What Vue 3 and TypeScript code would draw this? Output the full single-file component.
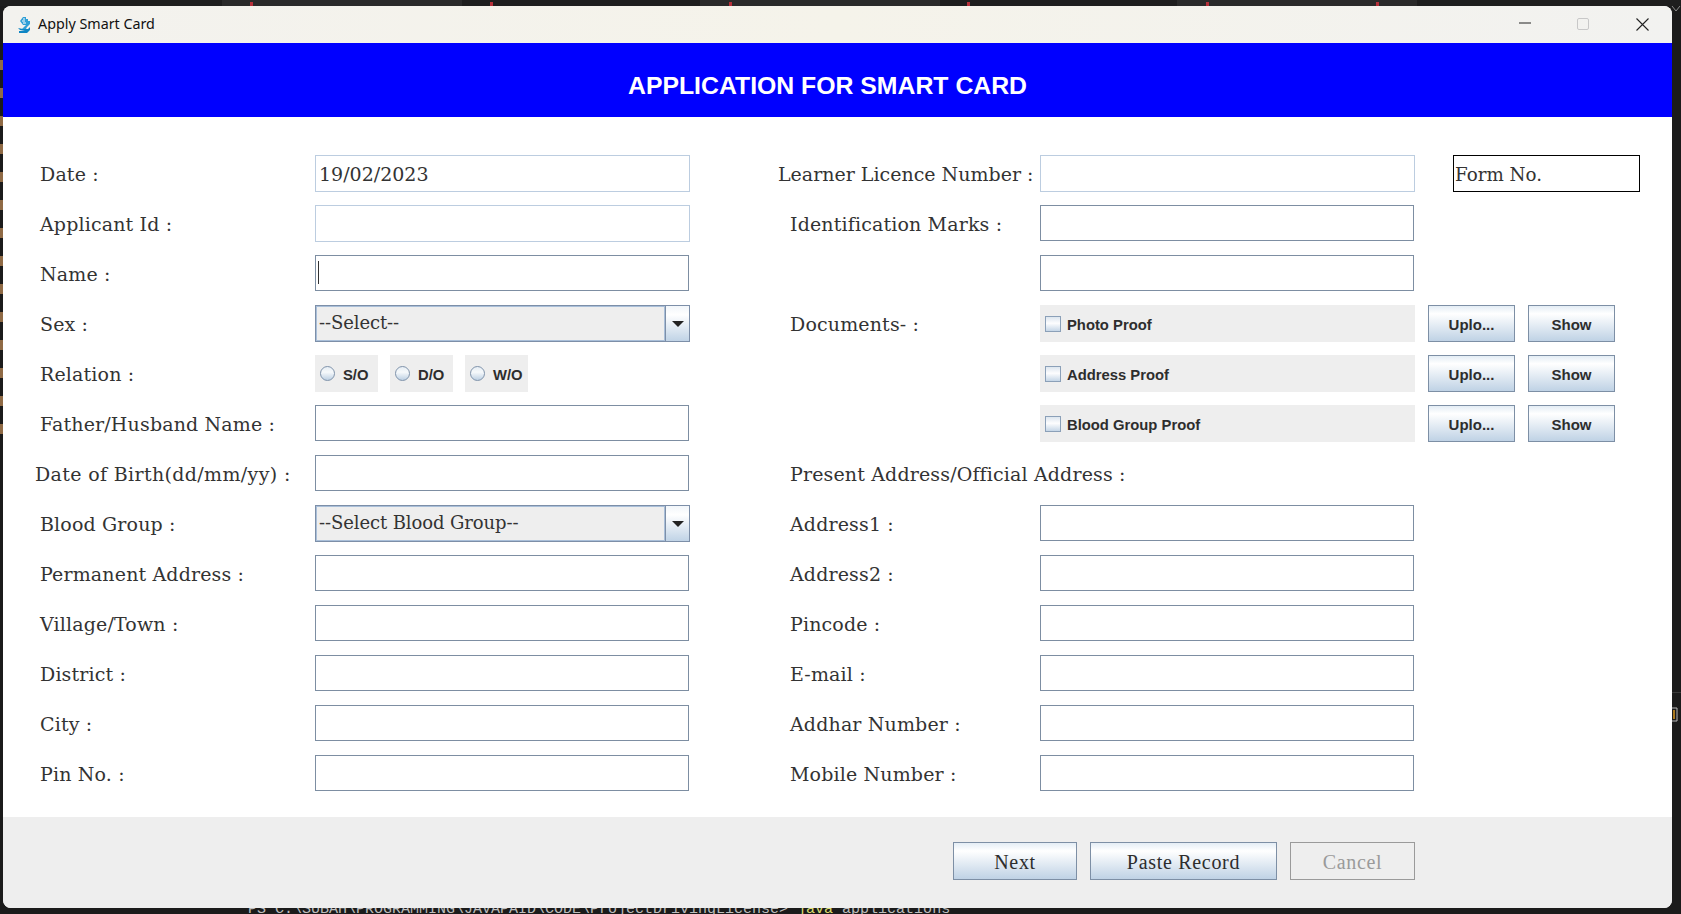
<script setup lang="ts">
type Ctl = { kind: 'input' | 'faint' | 'caret' | 'select' | 'radio' | 'check' | 'none'; value?: string }
interface Row {
  left: string
  leftCtl: Ctl
  right?: string
  rightCtl: Ctl
  shiftLeft?: boolean
  shiftRight?: boolean
  form?: boolean
  actions?: boolean
}
const rows: Row[] = [
  { left: 'Date :', leftCtl: { kind: 'faint', value: '19/02/2023' }, right: 'Learner Licence Number :', rightCtl: { kind: 'faint' }, shiftRight: true, form: true },
  { left: 'Applicant Id :', leftCtl: { kind: 'faint' }, right: 'Identification Marks :', rightCtl: { kind: 'input' } },
  { left: 'Name :', leftCtl: { kind: 'caret' }, rightCtl: { kind: 'input' } },
  { left: 'Sex :', leftCtl: { kind: 'select', value: '--Select--' }, right: 'Documents- :', rightCtl: { kind: 'check', value: 'Photo Proof' }, actions: true },
  { left: 'Relation :', leftCtl: { kind: 'radio' }, rightCtl: { kind: 'check', value: 'Address Proof' }, actions: true },
  { left: 'Father/Husband Name :', leftCtl: { kind: 'input' }, rightCtl: { kind: 'check', value: 'Blood Group Proof' }, actions: true },
  { left: 'Date of Birth(dd/mm/yy) :', leftCtl: { kind: 'input' }, right: 'Present Address/Official Address :', rightCtl: { kind: 'none' }, shiftLeft: true },
  { left: 'Blood Group :', leftCtl: { kind: 'select', value: '--Select Blood Group--' }, right: 'Address1 :', rightCtl: { kind: 'input' } },
  { left: 'Permanent Address :', leftCtl: { kind: 'input' }, right: 'Address2 :', rightCtl: { kind: 'input' } },
  { left: 'Village/Town :', leftCtl: { kind: 'input' }, right: 'Pincode :', rightCtl: { kind: 'input' } },
  { left: 'District :', leftCtl: { kind: 'input' }, right: 'E-mail :', rightCtl: { kind: 'input' } },
  { left: 'City :', leftCtl: { kind: 'input' }, right: 'Addhar Number :', rightCtl: { kind: 'input' } },
  { left: 'Pin No. :', leftCtl: { kind: 'input' }, right: 'Mobile Number :', rightCtl: { kind: 'input' } },
]
const radios = ['S/O', 'D/O', 'W/O']
const redMarks = [250, 490, 729, 967, 1206, 1376]
const sideMarks = Array.from({ length: 14 }, (_, i) => 60 + i * 28)
</script>

<template>
  <div class="desktop">
    <div class="tabs" aria-hidden="true">
      <i class="tab tab-a"></i><i class="tab tab-b"></i><i class="tab tab-c"></i>
      <i v-for="x in redMarks" :key="x" class="red" :style="{ left: x + 'px' }"></i>
    </div>
    <i v-for="y in sideMarks" :key="y" class="side" :style="{ top: y + 'px' }"></i>
    <svg class="corner" width="10" height="8" viewBox="0 0 10 8"><path d="M1 1l4 5 4-5" fill="none" stroke="#8a8a8a" /></svg>
    <i class="edge-line"></i>
    <svg class="edge-icon" width="6" height="17" viewBox="0 0 6 17"><path d="M0 3h5v13H0" fill="none" stroke="#b9b9b9" /><path d="M1 5h2v9H1z" fill="#a9781e" /></svg>
    <div class="terminal">PS C:\SUBAH\PROGRAMMING\JAVAPAID\CODE\ProjectDrivingLicense&gt; <span class="cmd">java</span> applications</div>

    <main class="window">
      <header class="titlebar">
        <svg class="app-icon" width="14" height="18" viewBox="0 0 14 18">
          <path d="M6 1h3v2h2v2h2v3l-3 3-1 2H5l4-4H6L3 5z" fill="#2f9fd6" />
          <path d="M6 3l2 0M5 5l3 0M6 7l3 0" stroke="#fff" stroke-width="1" />
          <path d="M1 12l5 1h5l2-2v3l-3 3H2v-2h6l-5-1z" fill="#0f86c4" />
        </svg>
        <span class="title">Apply Smart Card</span>
        <div class="controls">
          <svg class="ctl-min" width="12" height="2" viewBox="0 0 12 2"><path d="M0 1h12" stroke="#222" stroke-width="1.2" /></svg>
          <svg class="ctl-max" width="12" height="12" viewBox="0 0 12 12"><rect x=".5" y=".5" width="11" height="11" rx="1.5" fill="none" stroke="#c8c8c8" /></svg>
          <svg class="ctl-close" width="13" height="13" viewBox="0 0 13 13"><path d="M.5.5l12 12M12.5.5l-12 12" stroke="#222" stroke-width="1.1" /></svg>
        </div>
      </header>

      <div class="banner"><h1>APPLICATION FOR SMART CARD</h1></div>

      <section class="form">
        <div v-for="row in rows" :key="row.left" class="row">
          <label class="label" :class="{ 'shift-l': row.shiftLeft }">{{ row.left }}</label>

          <div class="ctl">
            <input v-if="row.leftCtl.kind === 'faint'" class="field faint" :value="row.leftCtl.value ?? ''" readonly />
            <div v-else-if="row.leftCtl.kind === 'caret'" class="caret-wrap">
              <input class="field" readonly />
              <i class="caret"></i>
            </div>
            <div v-else-if="row.leftCtl.kind === 'select'" class="combo">
              <span class="combo-text">{{ row.leftCtl.value }}</span>
              <span class="combo-btn"><i class="arrow"></i></span>
            </div>
            <div v-else-if="row.leftCtl.kind === 'radio'" class="radios">
              <span v-for="r in radios" :key="r" class="radio-box"><i class="radio"></i><b>{{ r }}</b></span>
            </div>
            <input v-else class="field" readonly />
          </div>

          <span></span>
          <label class="label" :class="{ 'shift-r': row.shiftRight }">{{ row.right ?? '' }}</label>

          <div class="ctl">
            <input v-if="row.rightCtl.kind === 'faint'" class="field faint" readonly />
            <div v-else-if="row.rightCtl.kind === 'check'" class="check-box"><i class="check"></i><b>{{ row.rightCtl.value }}</b></div>
            <input v-else-if="row.rightCtl.kind === 'input'" class="field" readonly />
          </div>

          <div class="extra">
            <div v-if="row.form" class="form-no">Form No.</div>
            <div v-if="row.actions" class="actions">
              <button class="small-btn" type="button">Uplo...</button>
              <button class="small-btn" type="button">Show</button>
            </div>
          </div>
        </div>
      </section>

      <footer class="footer">
        <button class="big-btn next" type="button">Next</button>
        <button class="big-btn paste" type="button">Paste Record</button>
        <button class="big-btn cancel" type="button" disabled>Cancel</button>
      </footer>
    </main>
  </div>
</template>

<style>
html, body { margin: 0; background: #1b1b1b; overflow: hidden; }
</style>

<style scoped>
.desktop {
  position: relative;
  box-sizing: border-box;
  width: 1681px;
  height: 914px;
  padding: 6px 9px 6px 3px;
  background: #1b1b1b;
  overflow: hidden;
}
.tabs { position: absolute; inset: 0 0 auto 0; height: 6px; background: #1e1e1e; }
.tab { position: absolute; top: 0; height: 6px; background: #2a2a2a; }
.tab-a { left: 222px; width: 240px; }
.tab-b { left: 700px; width: 240px; }
.tab-c { left: 1177px; width: 240px; }
.red { position: absolute; top: 2px; width: 3px; height: 4px; background: #b5303a; }
.side { position: absolute; left: 0; width: 3px; height: 10px; background: #8f6a45; }
.corner { position: absolute; left: 1671px; top: 5px; }
.edge-line { position: absolute; left: 1672px; top: 692px; width: 9px; height: 1px; background: #3a3a3a; }
.edge-icon { position: absolute; left: 1672px; top: 705px; }
.terminal {
  position: absolute;
  left: 248px;
  top: 901px;
  font: 15px/18px "Liberation Mono", monospace;
  color: #bdbdbd;
  white-space: pre;
}
.cmd { color: #dcdc6e; }

.window {
  position: relative;
  display: flex;
  flex-direction: column;
  height: 902px;
  background: #fff;
  border-radius: 8px;
  overflow: hidden;
}
.titlebar {
  display: flex;
  align-items: center;
  flex: 0 0 37px;
  background: linear-gradient(90deg, #f3f2ee, #f5f3ea 50%, #f2f2f0);
  padding-left: 14px;
}
.app-icon { flex: none; }
.title {
  margin-left: 7px;
  margin-top: -2px;
  font: 14.3px "Noto Sans", sans-serif;
  color: #111;
}
.controls { margin-left: auto; position: relative; width: 174px; height: 37px; flex: none; }
.ctl-min { position: absolute; left: 21px; top: 16px; }
.ctl-max { position: absolute; left: 79px; top: 12px; }
.ctl-close { position: absolute; left: 138px; top: 12px; }

.banner {
  flex: 0 0 74px;
  display: flex;
  justify-content: center;
  padding-right: 20px;
  background: #0000ff;
}
.banner h1 {
  margin: 29px 0 0;
  font: bold 24.8px/28px "Liberation Sans", sans-serif;
  color: #fff;
}

.form {
  flex: 1;
  display: flex;
  flex-direction: column;
  gap: 13px;
  padding: 38px 0 0 37px;
}
.row {
  display: grid;
  grid-template-columns: 275px 375px 100px 250px 375px 1fr;
  height: 37px;
}
.label {
  padding-top: 1px;
  font: 19px/37px "DejaVu Serif", serif;
  letter-spacing: 0.15px;
  color: #333;
  white-space: nowrap;
}
.shift-l { margin-left: -5px; letter-spacing: 0.35px; }
.shift-r { margin-left: -12px; letter-spacing: 0; }
.ctl { min-width: 0; }
.field {
  display: block;
  box-sizing: border-box;
  width: 374px;
  height: 36px;
  margin: 0;
  padding: 0 3px;
  border: 1px solid #7d8ea2;
  border-radius: 0;
  outline: none;
  background: #fff;
  font: 19px "DejaVu Serif", serif;
  color: #333;
}
.faint { width: 375px; height: 37px; border-color: #bccde0; }
.caret-wrap { position: relative; }
.caret { position: absolute; left: 3px; top: 6px; width: 1px; height: 23px; background: #333; }

.combo {
  box-sizing: border-box;
  display: flex;
  width: 375px;
  height: 37px;
  border: 1px solid #7d8fa8;
  background: #eee;
}
.combo-text {
  flex: 1;
  box-shadow: inset 0 0 0 1px #a9bfd9;
  padding-left: 3px;
  font: 18px/34px "DejaVu Serif", serif;
  letter-spacing: -0.1px;
  color: #333;
}
.combo-btn {
  flex: 0 0 23px;
  display: flex;
  align-items: center;
  justify-content: center;
  border-left: 1px solid #7d8fa8;
  background: linear-gradient(#f2f6fa, #fff 25%, #c0d3e6);
}
.arrow { border: solid transparent; border-width: 6px 6.5px 0; border-top-color: #222; }

.radios { display: flex; gap: 12px; }
.radio-box {
  box-sizing: border-box;
  display: flex;
  align-items: center;
  width: 63px;
  height: 37px;
  padding-left: 5px;
  background: #eee;
  font: bold 14.8px "Liberation Sans", sans-serif;
  color: #2d2d2d;
}
.radio-box b { margin-left: 8px; padding-top: 2px; }
.radio {
  box-sizing: border-box;
  width: 15px;
  height: 15px;
  border: 1px solid #7f93ab;
  border-radius: 50%;
  background: linear-gradient(#e6edf4, #f6f9fb 40%, #bdd0e3);
}
.check-box {
  box-sizing: border-box;
  display: flex;
  align-items: center;
  width: 375px;
  height: 37px;
  padding-left: 5px;
  background: #eee;
  font: bold 14.8px "Liberation Sans", sans-serif;
  color: #2d2d2d;
}
.check-box b { margin-left: 6px; padding-top: 2px; }
.check {
  box-sizing: border-box;
  width: 16px;
  height: 16px;
  border: 1px solid #8ba0b8;
  background: linear-gradient(#dde6ef, #fdfdfe 45%, #c5d6e7);
}
.extra { min-width: 0; }
.form-no {
  box-sizing: border-box;
  width: 187px;
  height: 37px;
  margin-left: 38px;
  padding: 1px 0 0 1px;
  border: 1px solid #000;
  font: 18.3px/35px "DejaVu Serif", serif;
  color: #333;
}
.actions { display: flex; gap: 13px; padding-left: 13px; }
.small-btn, .big-btn {
  box-sizing: border-box;
  margin: 0;
  padding: 0;
  border: 1px solid #7d8fa5;
  background: linear-gradient(#e4edf5, #fff 22%, #bfd2e5);
  color: #2d2d2d;
}
.small-btn {
  width: 87px;
  height: 37px;
  padding-top: 2px;
  font: bold 15px "Liberation Sans", sans-serif;
}
.footer {
  flex: 0 0 91px;
  box-sizing: border-box;
  display: flex;
  justify-content: flex-end;
  gap: 13px;
  padding: 25px 257px 0 0;
  background: #eee;
}
.big-btn {
  height: 38px;
  padding-top: 2px;
  font: 20px "Liberation Serif", serif;
  letter-spacing: 0.7px;
}
.next { width: 124px; }
.paste { width: 187px; }
.cancel { width: 125px; border-color: #9a9a9a; background: #eee; color: #9a9a9a; }
</style>
